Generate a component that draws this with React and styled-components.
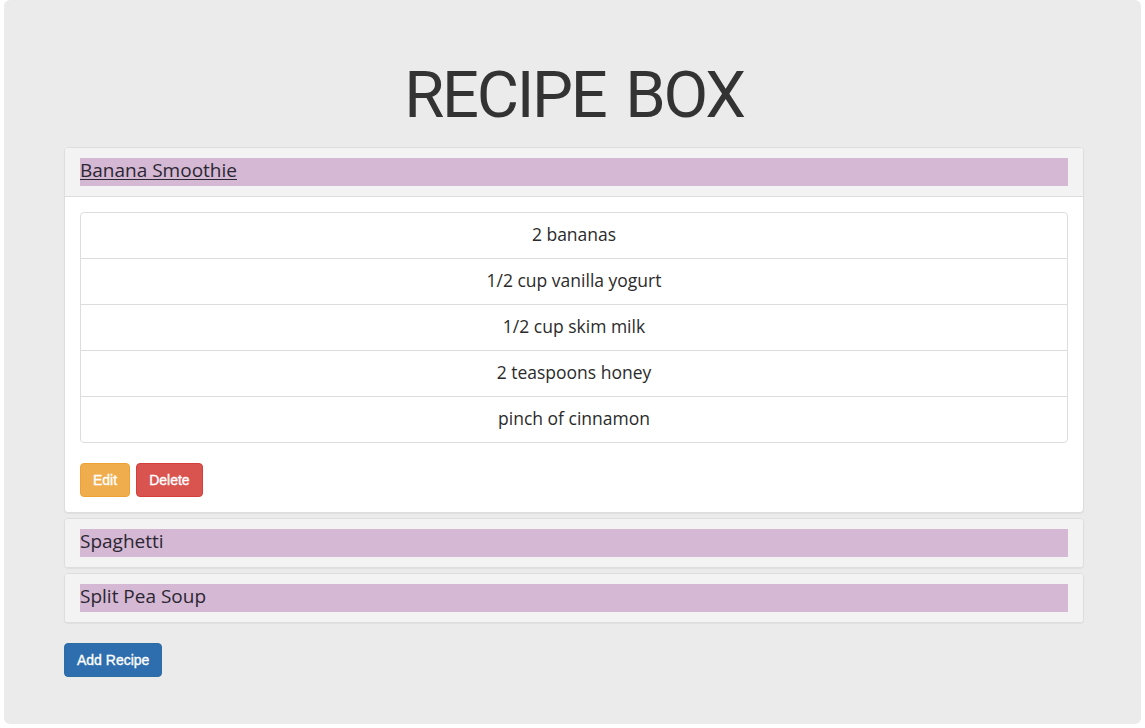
import React, { useState } from 'react';
import styled, { createGlobalStyle } from 'styled-components';

const GlobalStyle = createGlobalStyle`
  html, body {
    margin: 0;
    padding: 0;
    background: #ffffff;
  }
  body {
    font-family: 'Open Sans', 'DejaVu Sans', sans-serif;
    color: #333333;
  }
  * {
    box-sizing: border-box;
  }
`;

const Page = styled.div`
  padding: 0 4px;
  height: 728px;
`;

const Jumbotron = styled.div`
  background: #ebebeb;
  border-radius: 6px;
  height: 724px;
  padding: 54px 57px 0 60px;
`;

const Title = styled.h1`
  margin: 0 0 11px;
  text-align: center;
  font-family: 'Roboto', 'Open Sans', sans-serif;
  font-weight: 400;
  font-size: 65px;
  line-height: 82px;
  color: #333333;
  letter-spacing: -2.3px;
  word-spacing: 6px;
`;

const PanelGroup = styled.div`
  display: flex;
  flex-direction: column;
  gap: 5px;
  margin-bottom: 20px;
`;

const Panel = styled.div`
  background: #ffffff;
  border: 1px solid #dddddd;
  border-radius: 4px;
  box-shadow: 0 1px 1px rgba(0, 0, 0, 0.05);
  overflow: hidden;
`;

const PanelHeading = styled.div`
  background: #f3f3f3;
  padding: 10px 15px;
  border-bottom: ${(p) => (p.$open ? '1px solid #dddddd' : 'none')};
`;

const PanelTitle = styled.h4`
  margin: 0;
  padding-bottom: 4px;
  background: #d5b8d4;
  font-size: 19px;
  font-weight: 400;
  line-height: 24px;
  color: #2b2732;
  cursor: pointer;
  text-decoration: ${(p) => (p.$open ? 'underline' : 'none')};
  text-underline-offset: 2px;
`;

const PanelBody = styled.div`
  padding: 15px;
`;

const ListGroup = styled.ul`
  list-style: none;
  margin: 0 0 20px;
  padding: 0;
`;

const ListItem = styled.li`
  padding: 9px 15px 11px;
  border: 1px solid #dddddd;
  margin-bottom: -1px;
  text-align: center;
  font-size: 17.5px;
  line-height: 25px;
  color: #2b2b2b;

  &:first-child {
    border-top-left-radius: 4px;
    border-top-right-radius: 4px;
  }
  &:last-child {
    margin-bottom: 0;
    border-bottom-left-radius: 4px;
    border-bottom-right-radius: 4px;
  }
`;

const ButtonRow = styled.div`
  display: flex;
  gap: 6px;
`;

const tones = {
  warning: { bg: '#f0ad4e', border: '#eea236' },
  danger: { bg: '#d9534f', border: '#d43f3a' },
  primary: { bg: '#2e6eae', border: '#2e6da4' },
};

const Button = styled.button`
  font-family: 'Liberation Sans', Arial, sans-serif;
  font-size: 14px;
  line-height: 20px;
  padding: 6px 12px;
  color: #ffffff;
  background: ${(p) => tones[p.$tone].bg};
  border: 1px solid ${(p) => tones[p.$tone].border};
  border-radius: 4px;
  cursor: pointer;
  -webkit-text-stroke: 0.35px #ffffff;
`;

const recipes = [
  {
    name: 'Banana Smoothie',
    ingredients: [
      '2 bananas',
      '1/2 cup vanilla yogurt',
      '1/2 cup skim milk',
      '2 teaspoons honey',
      'pinch of cinnamon',
    ],
  },
  { name: 'Spaghetti', ingredients: ['pasta', 'tomato sauce'] },
  { name: 'Split Pea Soup', ingredients: ['split peas', 'ham', 'onion'] },
];

const App = () => {
  const [open, setOpen] = useState(0);

  return (
    <Page>
      <GlobalStyle />
      <Jumbotron>
        <Title>RECIPE BOX</Title>
        <PanelGroup>
          {recipes.map((recipe, i) => (
            <Panel key={recipe.name}>
              <PanelHeading $open={open === i}>
                <PanelTitle $open={open === i} onClick={() => setOpen(open === i ? -1 : i)}>
                  {recipe.name}
                </PanelTitle>
              </PanelHeading>
              {open === i && (
                <PanelBody>
                  <ListGroup>
                    {recipe.ingredients.map((item) => (
                      <ListItem key={item}>{item}</ListItem>
                    ))}
                  </ListGroup>
                  <ButtonRow>
                    <Button $tone="warning">Edit</Button>
                    <Button $tone="danger">Delete</Button>
                  </ButtonRow>
                </PanelBody>
              )}
            </Panel>
          ))}
        </PanelGroup>
        <Button $tone="primary">Add Recipe</Button>
      </Jumbotron>
    </Page>
  );
};

export default App;
